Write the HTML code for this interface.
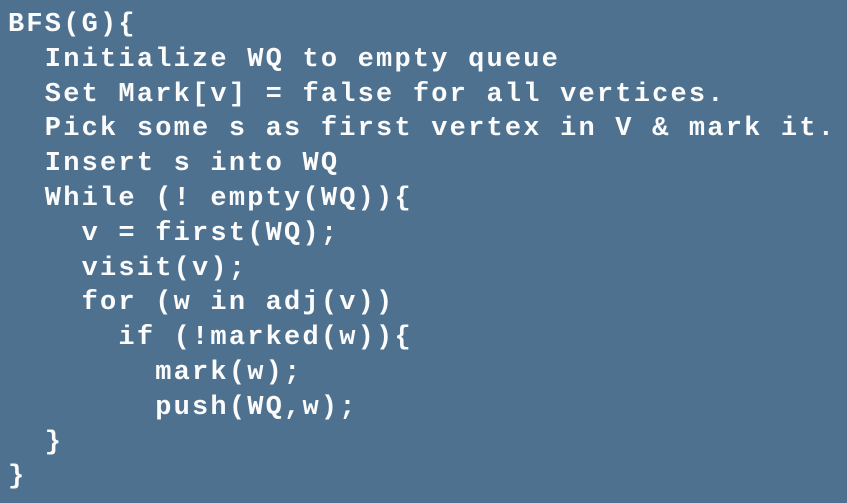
<!DOCTYPE html>
<html><head><style>
html,body{margin:0;padding:0;}
body{width:847px;height:503px;background:#4e7190;overflow:hidden;}
pre{margin:0;position:absolute;left:8px;top:8px;font-family:"Liberation Mono",monospace;font-weight:bold;font-size:27px;letter-spacing:2.2px;line-height:34.8px;color:#fbfbfb;}
</style></head><body>
<pre>BFS(G){
  Initialize WQ to empty queue
  Set Mark[v] = false for all vertices.
  Pick some s as first vertex in V &amp; mark it.
  Insert s into WQ
  While (! empty(WQ)){
    v = first(WQ);
    visit(v);
    for (w in adj(v))
      if (!marked(w)){
        mark(w);
        push(WQ,w);
  }
}</pre>
</body></html>
